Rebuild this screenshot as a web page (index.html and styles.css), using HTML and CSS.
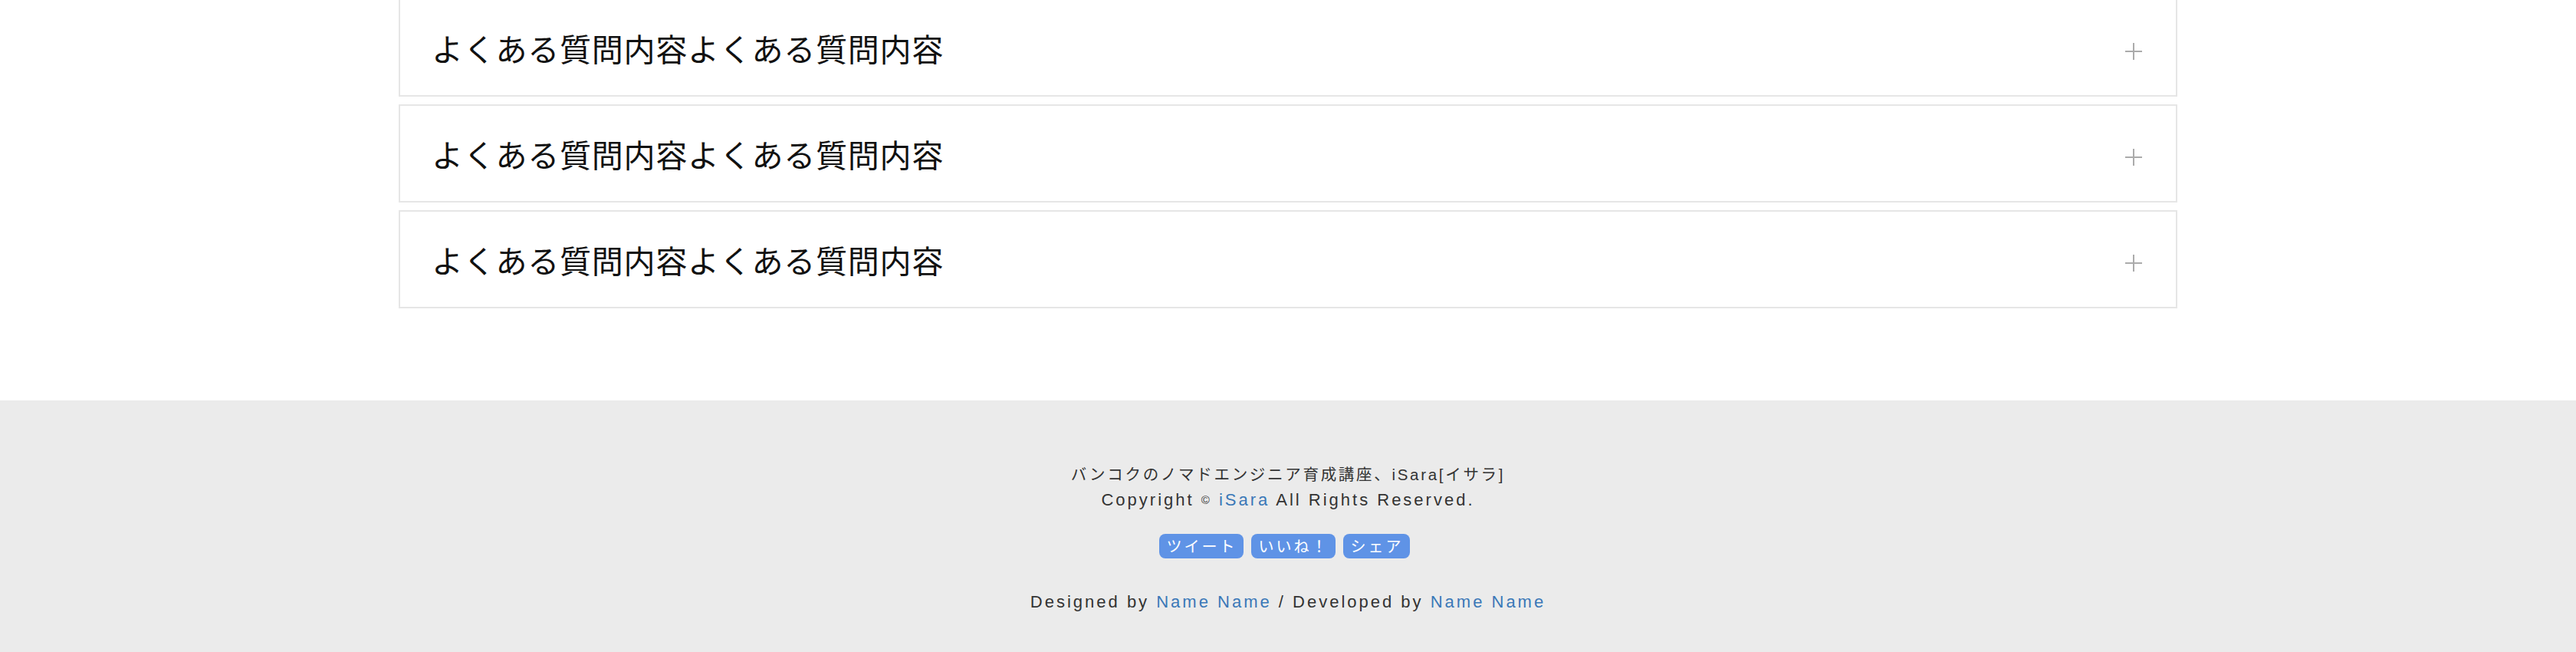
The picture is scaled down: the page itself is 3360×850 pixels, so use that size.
FILE: index.html
```html
<!DOCTYPE html>
<html lang="ja">
<head>
<meta charset="utf-8">
<title>FAQ</title>
<link rel="stylesheet" href="styles.css">
</head>
<body>
<main class="faq">
  <ul class="faq-list">
    <li class="faq-item">
      <span class="faq-q">よくある質問内容よくある質問内容</span>
      <span class="faq-plus" aria-hidden="true"></span>
    </li>
    <li class="faq-item">
      <span class="faq-q">よくある質問内容よくある質問内容</span>
      <span class="faq-plus" aria-hidden="true"></span>
    </li>
    <li class="faq-item">
      <span class="faq-q">よくある質問内容よくある質問内容</span>
      <span class="faq-plus" aria-hidden="true"></span>
    </li>
  </ul>
</main>
<footer class="footer">
  <p class="footer-title">バンコクのノマドエンジニア育成講座、iSara[イサラ]</p>
  <p class="footer-copy">Copyright <span class="copy-mark">©</span> <a href="#" class="link">iSara</a> All Rights Reserved.</p>
  <div class="share">
    <a href="#" class="share-btn">ツイート</a>
    <a href="#" class="share-btn">いいね！</a>
    <a href="#" class="share-btn">シェア</a>
  </div>
  <p class="footer-credit">Designed by <a href="#" class="link">Name Name</a> / Developed by <a href="#" class="link">Name Name</a></p>
</footer>
</body>
</html>
```
FILE: styles.css
```css
html, body {
  margin: 0;
  padding: 0;
  background: #ffffff;
}
body {
  font-family: "Liberation Sans", "Noto Sans CJK JP", sans-serif;
  color: #333333;
}
.faq {
  display: flex;
  justify-content: center;
  margin-top: -2px;
  padding-bottom: 120px;
}
.faq-list {
  list-style: none;
  margin: 0;
  padding: 0;
  width: 2320px;
  display: flex;
  flex-direction: column;
  gap: 10px;
}
.faq-item {
  box-sizing: border-box;
  height: 128px;
  border: 2px solid #e6e6e6;
  background: #ffffff;
  display: flex;
  align-items: center;
  justify-content: space-between;
  padding: 0 44px 0 41px;
}
.faq-q {
  font-family: "Noto Sans CJK JP", sans-serif;
  font-size: 41px;
  letter-spacing: 0.75px;
  line-height: 60px;
  color: #111111;
}
.faq-plus {
  position: relative;
  width: 22px;
  height: 22px;
  margin-top: 9px;
  flex: none;
}
.faq-plus::before,
.faq-plus::after {
  content: "";
  position: absolute;
  background: #ababab;
}
.faq-plus::before {
  left: 0;
  right: 0;
  top: 10px;
  height: 2px;
}
.faq-plus::after {
  top: 0;
  bottom: 0;
  left: 10px;
  width: 2px;
}
.footer {
  background: #ebebeb;
  padding: 80px 0 60px;
  text-align: center;
  min-height: 328px;
  box-sizing: border-box;
}
.footer p {
  margin: 0;
}
.footer-title {
  font-size: 20.5px;
  letter-spacing: 2.7px;
  line-height: 33px;
}
.footer-copy {
  font-size: 22px;
  letter-spacing: 3px;
  line-height: 33px;
}
.copy-mark {
  font-size: 15px;
  vertical-align: 2px;
}
.link {
  color: #3a78b8;
  text-decoration: none;
}
.share {
  display: flex;
  justify-content: center;
  gap: 10px;
  margin-top: 28px;
  padding-right: 10px;
}
.share-btn {
  display: block;
  height: 32px;
  line-height: 32px;
  padding: 0 8px 0 10px;
  border-radius: 8px;
  background: #5f93e6;
  color: #ffffff;
  font-family: "Noto Sans CJK JP", sans-serif;
  font-size: 20px;
  letter-spacing: 3px;
  text-decoration: none;
}
.footer-credit {
  margin-top: 40px !important;
  font-size: 22px;
  letter-spacing: 3px;
  line-height: 33px;
}
```
